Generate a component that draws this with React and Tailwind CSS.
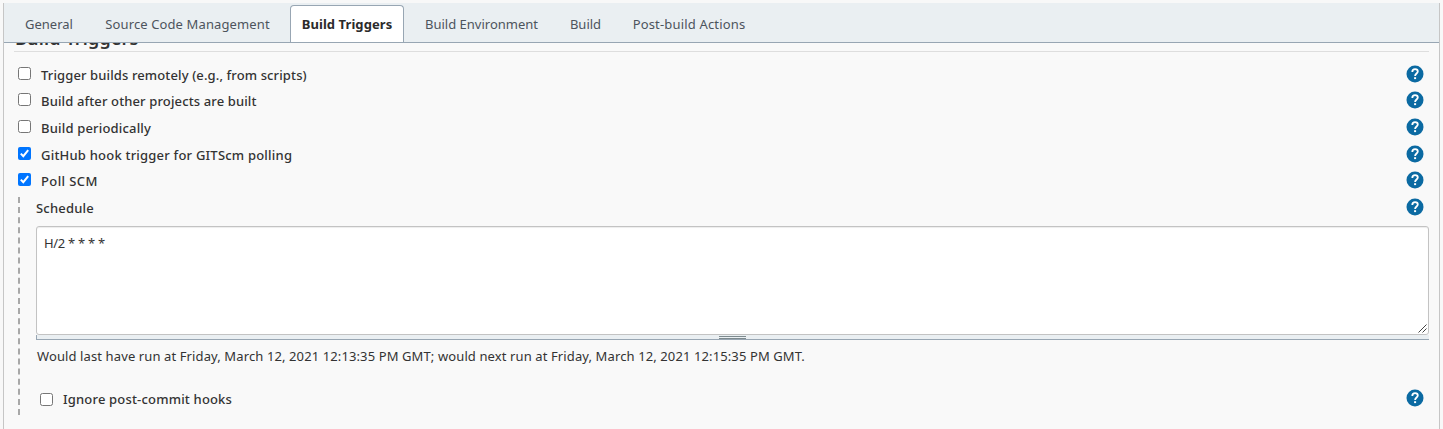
import React from "react";

const tabs = [
  { label: "General", cls: "w-[80px] pt-[4px] text-[#4d545d]" },
  { label: "Source Code Management", cls: "mr-[4px] w-[197px] pt-[4px] tracking-[0.12px] text-[#4d545d]" },
  {
    label: "Build Triggers",
    cls: "w-[114px] mt-[2px] rounded-t-[4px] border border-b-0 border-[#98a6b3] bg-white pt-px font-bold tracking-[0.07px] text-[#2b2b2b]",
  },
  { label: "Build Environment", cls: "w-[155px] pt-[4px] text-[#4d545d]" },
  { label: "Build", cls: "w-[53px] pt-[4px] text-[#4d545d]" },
  { label: "Post-build Actions", cls: "w-[154px] pt-[4px] tracking-[0.17px] text-[#4d545d]" },
];

const triggers = [
  { label: "Trigger builds remotely (e.g., from scripts)", checked: false, cls: "h-[26px] tracking-[0.12px]" },
  { label: "Build after other projects are built", checked: false, cls: "h-[27px] tracking-[0.13px]" },
  { label: "Build periodically", checked: false, cls: "h-[27px] tracking-[0.18px]" },
  { label: "GitHub hook trigger for GITScm polling", checked: true, cls: "h-[26px] tracking-[0.21px]" },
  { label: "Poll SCM", checked: true, cls: "h-[27px] tracking-[0.4px]" },
];

function Checkbox({ checked }) {
  return (
    <svg width="13" height="13" viewBox="0 0 13 13" className="shrink-0">
      {checked ? (
        <>
          <rect width="13" height="13" rx="2" fill="#0075ff" />
          <path d="M2.8 6.6 L5.3 9.2 L10.2 3.2" fill="none" stroke="#fff" strokeWidth="2" />
        </>
      ) : (
        <rect x="0.5" y="0.5" width="12" height="12" rx="2" fill="#fff" stroke="#767676" />
      )}
    </svg>
  );
}

function HelpIcon() {
  return (
    <svg width="18" height="18" viewBox="0 0 18 18" className="shrink-0">
      <circle cx="9" cy="9" r="8.5" fill="#0b6aa2" />
      <path
        d="M6.3 6.9 C6.3 5.2 7.5 4.2 9.1 4.2 C10.7 4.2 11.8 5.2 11.8 6.6 C11.8 8.4 9.1 8.6 9.1 10.9"
        fill="none"
        stroke="#fff"
        strokeWidth="1.8"
      />
      <rect x="8.1" y="12.2" width="2" height="1.9" fill="#fff" />
    </svg>
  );
}

export default function App() {
  return (
    <div className="h-[429px] w-[1443px] overflow-hidden bg-[#f8f8f8] pt-[3px] pl-[3px] font-['Noto_Sans','Open_Sans',sans-serif] text-[13px] text-[#333]">
      <div className="h-[426px] w-[1437px] border-x border-[#c6c6c6] bg-[#f9f9f9]">
        <div className="flex h-[40px] border-b border-[#98a6b3] bg-[#eaeff2] pl-[5px]">
          {tabs.map((t) => (
            <div key={t.label} className={`flex items-center justify-center whitespace-nowrap ${t.cls}`}>
              {t.label}
            </div>
          ))}
        </div>
        <div className="ml-[10px] flex h-[9px] w-[1415px] items-end overflow-hidden border-b border-[#dedede]">
          <h2 className="h-[25px] pl-px text-[18px] leading-[24px] font-semibold tracking-[0.15px]">Build Triggers</h2>
        </div>
        <div className="mt-[13px] ml-[14px] w-[1406px]">
          {triggers.map((t) => (
            <div key={t.label} className={`flex items-start ${t.cls}`}>
              <div className="pt-[2px]">
                <Checkbox checked={t.checked} />
              </div>
              <span className="ml-[10px] leading-[20px] font-medium">{t.label}</span>
              <div className="ml-auto">
                <HelpIcon />
              </div>
            </div>
          ))}
        </div>
        <div className="-mt-px ml-[14px] h-[218px] w-[1411px] border-l-2 border-dashed border-[#a8a8a8] pl-4">
          <div className="flex h-[29px] w-[1388px] items-start pt-px">
            <span className="leading-[20px] font-medium tracking-[0.2px]">Schedule</span>
            <div className="ml-auto">
              <HelpIcon />
            </div>
          </div>
          <div className="flex h-[109px] w-[1393px] justify-between rounded-[3px] border border-[#c3c3c3] bg-white shadow-[inset_0_1px_1px_#00000013]">
            <span className="pt-[6px] pl-[7px] leading-[20px] tracking-[-0.3px]">H/2 * * * *</span>
            <svg width="10" height="10" viewBox="0 0 10 10" className="self-end">
              <path d="M0.5 8.5 L8.5 0.5 M4.5 8.5 L8.5 4.5" stroke="#444" strokeWidth="1" />
            </svg>
          </div>
          <div className="flex h-[5px] w-[1393px] justify-center border-b border-l border-[#98a6b3] bg-[#eaeff2]">
            <div className="mt-px mr-[2px] h-[3px] w-[27px] border-y border-[#7d8a8e]" />
          </div>
          <p className="mt-[6px] ml-[1px] h-[20px] leading-[20px] tracking-[0.11px]">
            Would last have run at Friday, March 12, 2021 12:13:35 PM GMT; would next run at Friday, March 12, 2021
            12:15:35 PM GMT.
          </p>
          <div className="mt-[23px] ml-1 flex w-[1384px] items-start">
            <div className="pt-1">
              <Checkbox checked={false} />
            </div>
            <span className="ml-[10px] leading-[20px] font-medium tracking-[0.18px]">Ignore post-commit hooks</span>
            <div className="ml-auto">
              <HelpIcon />
            </div>
          </div>
        </div>
      </div>
    </div>
  );
}
